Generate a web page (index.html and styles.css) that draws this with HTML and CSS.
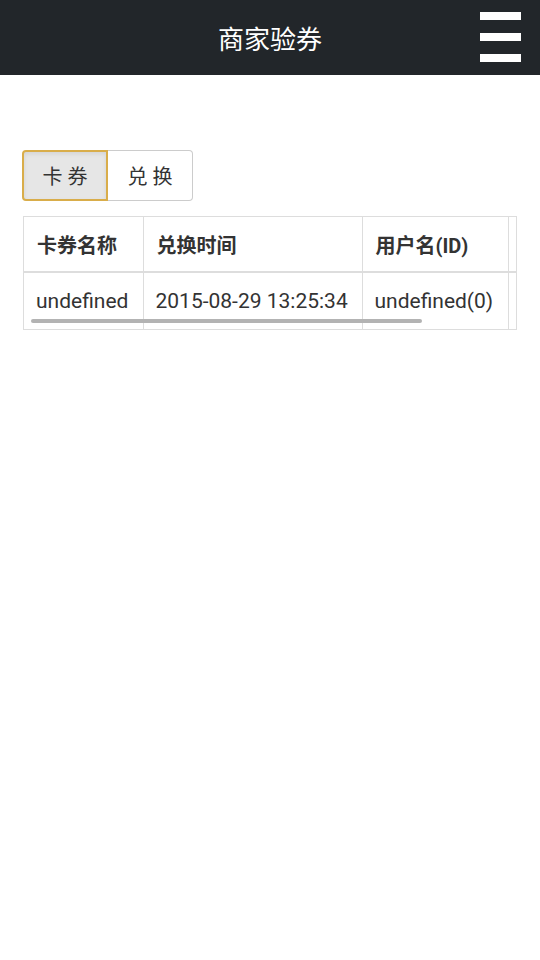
FILE: index.html
```html
<!DOCTYPE html>
<html lang="zh-CN">
<head>
  <meta charset="UTF-8">
  <title>商家验券</title>
  <link rel="stylesheet" href="styles.css">
</head>
<body>

  <div class="topbar">
    <h1>商家验券</h1>
    <div class="menu-btn">
      <span></span><span></span><span></span>
    </div>
  </div>

  <div class="content">
    <div class="btn-group">
      <button class="tab active">卡 券</button>
      <button class="tab">兑 换</button>
    </div>

    <div class="table-wrap">
      <table>
        <colgroup>
          <col class="c1"><col class="c2"><col class="c3"><col class="c4">
        </colgroup>
        <thead>
          <tr>
            <th>卡券名称</th>
            <th>兑换时间</th>
            <th>用户名(ID)</th>
            <th></th>
          </tr>
        </thead>
        <tbody>
          <tr>
            <td>undefined</td>
            <td>2015-08-29 13:25:34</td>
            <td>undefined(0)</td>
            <td></td>
          </tr>
        </tbody>
      </table>
      <div class="scroll-thumb"></div>
    </div>
  </div>

</body>
</html>
```

FILE: styles.css
```css
body {
  margin: 0;
  font-family: Roboto, "Noto Sans CJK SC", sans-serif;
  background: #fff;
  color: #333;
}
.topbar {
  height: 75px;
  background: #22262a;
  display: flex;
  align-items: center;
  justify-content: center;
  position: relative;
}
.topbar h1 {
  margin: 0;
  color: #fff;
  font-size: 26px;
  font-weight: normal;
}
.menu-btn {
  position: absolute;
  right: 19px;
  top: 12px;
  width: 41px;
  display: flex;
  flex-direction: column;
  gap: 13px;
}
.menu-btn span {
  display: block;
  height: 8px;
  background: #fff;
}
.content {
  padding: 75px 0 0 22px;
}
.btn-group {
  display: flex;
  margin-bottom: 15px;
}
.tab {
  width: 86px;
  height: 51px;
  margin: 0;
  font-family: Roboto, "Noto Sans CJK SC", sans-serif;
  font-size: 20px;
  color: #333;
  background: #fff;
  border: 1px solid #ccc;
  cursor: pointer;
}
.tab:first-child {
  border-radius: 4px 0 0 4px;
}
.tab:last-child {
  width: 85px;
  border-left: none;
  border-radius: 0 4px 4px 0;
}
.tab.active {
  background: #e6e6e6;
  border: 2px solid #d9ad4a;
  box-shadow: inset 0 2px 4px rgba(0,0,0,0.08);
}
.table-wrap {
  position: relative;
  margin-left: 1px;
  width: 492px;
  border: 1px solid #ddd;
  overflow: hidden;
}
table {
  border-collapse: collapse;
  table-layout: fixed;
  width: 620px;
}
col.c1 { width: 119px; }
col.c2 { width: 219px; }
col.c3 { width: 146px; }
col.c4 { width: 136px; }
th, td {
  text-align: left;
  padding: 0 12px;
  white-space: nowrap;
  border-right: 1px solid #ddd;
}
th {
  height: 54px;
  padding-left: 13px;
  font-size: 20px;
  font-weight: bold;
  border-bottom: 2px solid #ddd;
}
td {
  height: 56px;
  font-size: 21px;
}
.scroll-thumb {
  position: absolute;
  left: 7px;
  bottom: 6px;
  width: 391px;
  height: 4px;
  border-radius: 2px;
  background: #b3b3b3;
}
```
